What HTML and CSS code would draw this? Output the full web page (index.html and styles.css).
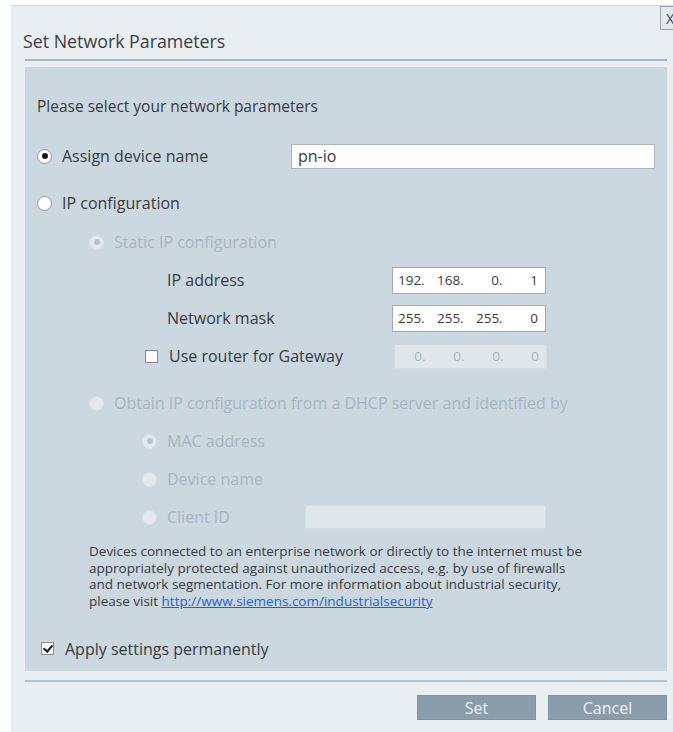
FILE: index.html
```html
<!DOCTYPE html>
<html lang="en">
<head>
<meta charset="utf-8">
<title>Set Network Parameters</title>
<link rel="stylesheet" href="styles.css">
</head>
<body>
<div class="dialog">
  <button class="close" type="button">X</button>
  <header class="dialog-head">
    <h1 class="dialog-title">Set Network Parameters</h1>
    <div class="rule"></div>
  </header>

  <section class="panel">
    <p class="row intro">Please select your network parameters</p>

    <div class="row gap-assign">
      <span class="radio checked"></span>
      <span class="label">Assign device name</span>
      <div class="field name-field">pn-io</div>
    </div>

    <div class="row gap-ipconf">
      <span class="radio"></span>
      <span class="label">IP configuration</span>
    </div>

    <div class="row lvl2 gap-static">
      <span class="radio disabled checked"></span>
      <span class="label muted">Static IP configuration</span>
    </div>

    <div class="row lvl3">
      <span class="ip-label">IP address</span>
      <div class="ip">
        <span class="oct">192</span><span class="dot">.</span><span class="oct">168</span><span class="dot">.</span><span class="oct">0</span><span class="dot">.</span><span class="oct">1</span>
      </div>
    </div>

    <div class="row lvl3">
      <span class="ip-label">Network mask</span>
      <div class="ip">
        <span class="oct">255</span><span class="dot">.</span><span class="oct">255</span><span class="dot">.</span><span class="oct">255</span><span class="dot">.</span><span class="oct">0</span>
      </div>
    </div>

    <div class="row gw-row">
      <span class="check"></span>
      <span class="gw-label">Use router for Gateway</span>
      <div class="ip ip-off">
        <span class="oct">0</span><span class="dot">.</span><span class="oct">0</span><span class="dot">.</span><span class="oct">0</span><span class="dot">.</span><span class="oct">0</span>
      </div>
    </div>

    <div class="row lvl2 gap-dhcp">
      <span class="radio disabled"></span>
      <span class="label muted">Obtain IP configuration from a DHCP server and identified by</span>
    </div>

    <div class="row lvl3r">
      <span class="radio disabled checked"></span>
      <span class="label muted">MAC address</span>
    </div>

    <div class="row lvl3r">
      <span class="radio disabled"></span>
      <span class="label muted">Device name</span>
    </div>

    <div class="row lvl3r">
      <span class="radio disabled"></span>
      <span class="label muted client-label">Client ID</span>
      <div class="field field-off client-field"></div>
    </div>

    <p class="notice">Devices connected to an enterprise network or directly to the internet must be<br>
    appropriately protected against unauthorized access, e.g. by use of firewalls<br>
    and network segmentation. For more information about industrial security,<br>
    please visit <a href="#">http://www.siemens.com/industrialsecurity</a></p>

    <div class="row apply-row">
      <span class="check on"></span>
      <span class="label">Apply settings permanently</span>
    </div>
  </section>

  <div class="rule bottom-rule"></div>

  <footer class="actions">
    <button class="btn" type="button">Set</button>
    <button class="btn" type="button">Cancel</button>
  </footer>
</div>
</body>
</html>
```

FILE: styles.css
```css
html, body {
  margin: 0;
  padding: 0;
  background: #ffffff;
  overflow: hidden;
}

body {
  font-family: "Open Sans", "Noto Sans", sans-serif;
  color: #383b3e;
  height: 732px;
}

/* window frame */
.dialog {
  position: relative;
  margin: 5px 0 0 11px;
  height: 727px;
  box-sizing: border-box;
  background: #e9eef2;
  border-top: 1px solid #cfd8df;
  display: flex;
  flex-direction: column;
}

.close {
  position: absolute;
  top: 0;
  left: 649px;
  width: 22px;
  height: 24px;
  padding: 0 0 0 5px;
  box-sizing: border-box;
  border: 1px solid #94a7b6;
  background: #e2e9ee;
  color: #3a4650;
  font: 14px "Open Sans", sans-serif;
  text-align: left;
}

/* title */
.dialog-head {
  padding-top: 23px;
}

.dialog-title {
  margin: 0 0 0 12px;
  font-size: 17.8px;
  font-weight: 400;
  line-height: 24px;
  color: #3b3f43;
}

.rule {
  height: 2px;
  margin: 6px 6px 0 14px;
  background: #a5b5c2;
}

/* main settings area */
.panel {
  margin: 6px 6px 0 14px;
  padding: 20px 12px 3px 12px;
  height: 604px;
  box-sizing: border-box;
  background: #cbd8e0;
  font-size: 16px;
}

.row {
  display: flex;
  align-items: center;
  height: 38px;
  margin: 0;
}

.intro {
  font-size: 15.5px;
}

.gap-assign { margin-top: 12px; }
.gap-ipconf { margin-top: 9px; }
.gap-static { margin-top: 1px; }
.gap-dhcp { margin-top: 9px; }

.lvl2 { padding-left: 52px; }
.lvl3 { padding-left: 130px; }
.lvl3r { padding-left: 105px; }
.gw-row { padding-left: 108px; }

.label {
  margin-left: 10px;
}

.muted {
  color: #a8b6c0;
}

/* radio buttons */
.radio {
  flex: none;
  width: 15px;
  height: 15px;
  box-sizing: border-box;
  border-radius: 50%;
  border: 1px solid #8e9aa3;
  background: #ffffff;
  display: flex;
  align-items: center;
  justify-content: center;
}

.radio.checked::after {
  content: "";
  width: 6px;
  height: 6px;
  border-radius: 50%;
  background: #161616;
}

.radio.disabled {
  border-color: #d9e1e7;
  background: #e3e9ee;
}

.radio.disabled.checked::after {
  background: #b7c3cb;
}

/* check boxes */
.check {
  flex: none;
  width: 13px;
  height: 13px;
  box-sizing: border-box;
  border: 1px solid #7f8d98;
  background: #ffffff;
  position: relative;
}

.check.on::after {
  content: "";
  position: absolute;
  left: 3px;
  top: 0px;
  width: 4px;
  height: 7px;
  border: solid #1c1c1c;
  border-width: 0 2px 2px 0;
  transform: rotate(40deg);
}

.gw-label {
  width: 224px;
  margin-left: 11px;
}

/* text fields */
.field {
  box-sizing: border-box;
  background: #ffffff;
  border: 1px solid #a8b7c3;
}

.name-field {
  margin-left: auto;
  width: 364px;
  height: 25px;
  padding-left: 6px;
  line-height: 23px;
  font-size: 16px;
}

.field-off {
  background: #dfe6ec;
  border-color: #d3dce3;
}

.client-label {
  width: 138px;
}

.client-field {
  width: 241px;
  height: 24px;
}

/* ip address boxes */
.ip-label {
  width: 225px;
}

.ip {
  display: flex;
  align-items: center;
  width: 154px;
  height: 27px;
  box-sizing: border-box;
  padding-left: 5px;
  background: #ffffff;
  border: 1px solid #9aacb9;
  font-size: 13.5px;
  color: #3a3d40;
}

.oct {
  width: 23px;
  text-align: right;
}

.dot {
  width: 16px;
}

.ip-off {
  margin-left: 1px;
  width: 153px;
  height: 25px;
  padding-left: 4px;
  background: #dfe6ec;
  border-color: #d3dce3;
  color: #a9b5be;
}

/* security notice */
.notice {
  margin: 7px 0 0 52px;
  font-size: 13.5px;
  line-height: 16.7px;
  color: #383b3e;
}

.notice a {
  color: #1b63d4;
  text-decoration: underline;
}

.apply-row {
  margin-top: 20px;
  padding-left: 4px;
}

.apply-row .label {
  margin-left: 11px;
  font-size: 16px;
}

.bottom-rule {
  margin-top: 9px;
  background: #b4c2cd;
}

/* buttons */
.actions {
  display: flex;
  justify-content: flex-end;
  gap: 12px;
  margin: 13px 6px 0 0;
}

.btn {
  width: 119px;
  height: 25px;
  padding: 0;
  border: 1px solid #7f94a3;
  background: #8a9dab;
  color: #eef2f5;
  font-family: "Open Sans", "Noto Sans", sans-serif;
  font-size: 16px;
  line-height: 22px;
}
```
